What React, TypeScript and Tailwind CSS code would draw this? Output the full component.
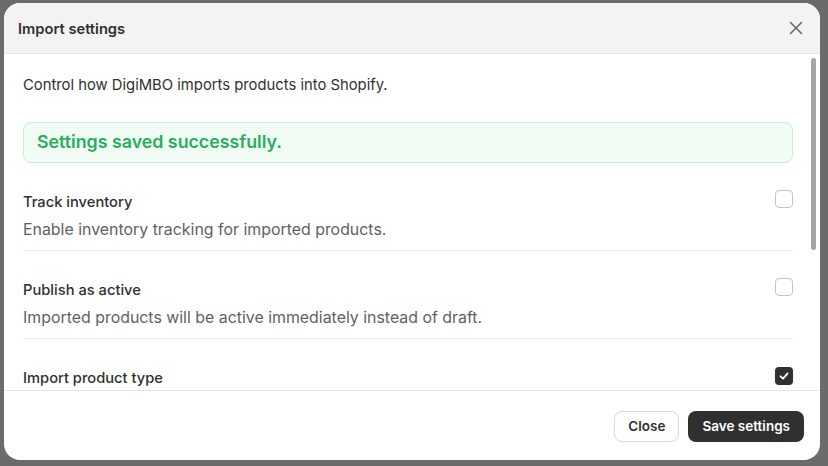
import React from "react";

function Checkbox({ checked }: { checked?: boolean }) {
  if (checked) {
    return (
      <div className="w-[18px] h-[18px] rounded-[4px] bg-[#303030] flex items-center justify-center shrink-0">
        <svg width="12" height="12" viewBox="0 0 12 12" fill="none">
          <path d="M2.5 6.3 L5 8.6 L9.6 3.4" stroke="white" strokeWidth="1.8" strokeLinecap="round" strokeLinejoin="round" />
        </svg>
      </div>
    );
  }
  return <div className="w-[18px] h-[18px] rounded-[4px] border border-[#c4c4c4] bg-white shrink-0" />;
}

function Row({ label, desc, checked, last }: { label: string; desc?: string; checked?: boolean; last?: boolean }) {
  return (
    <div className={`flex justify-between items-start ${last ? "" : "border-b border-[#e6e8e8]"} pt-[28px] pb-[8px]`}>
      <div className="flex flex-col">
        <div className="text-[14.7px] leading-[22px] font-medium text-[#303030]">{label}</div>
        {desc && <div className="text-[15.9px] leading-[24px] mt-[5px] text-[#616161]">{desc}</div>}
      </div>
      <div className={last ? "" : "mt-[-1px]"}>
        <Checkbox checked={checked} />
      </div>
    </div>
  );
}

export default function App() {
  return (
    <div className="w-[828px] h-[466px] bg-[#6b6b6b] pt-[3px] pl-[4px] pr-[8px] pb-[6px] flex" style={{ fontFamily: "Inter, 'Liberation Sans', sans-serif" }}>
      <div className="relative flex-1 bg-white rounded-[16px] overflow-hidden flex flex-col">
        <div className="h-[51px] bg-[#f3f3f3] border-b border-[#e3e3e3] flex items-center justify-between pl-[14px] pr-[17px] shrink-0">
          <div className="text-[14.7px] font-semibold text-[#303030] pt-[2px]">Import settings</div>
          <svg width="14" height="14" viewBox="0 0 14 14" fill="none">
            <path d="M1.5 1.5 L12.5 12.5 M12.5 1.5 L1.5 12.5" stroke="#6b6b6b" strokeWidth="1.6" strokeLinecap="round" />
          </svg>
        </div>
        <div className="relative h-[337px] overflow-hidden border-b border-[#e6e6e6] shrink-0">
          <div className="pl-[19px] pr-[27px] pt-[19px]">
            <div className="text-[14.8px] leading-[24px] text-[#303030]">Control how DigiMBO imports products into Shopify.</div>
            <div className="mt-[25px] h-[41px] rounded-[8px] border border-[#c8ecd4] bg-[#f0fcf4] flex items-center pl-[13px]">
              <span className="text-[17.8px] font-semibold text-[#2aad5c]">Settings saved successfully.</span>
            </div>
            <div>
              <Row label="Track inventory" desc="Enable inventory tracking for imported products." />
              <Row label="Publish as active" desc="Imported products will be active immediately instead of draft." />
              <Row label="Import product type" checked last />
            </div>
          </div>
          <div className="absolute right-[4px] top-[4px] w-[5px] h-[192px] rounded-full bg-[#a3a6a8]" />
        </div>
        <div className="flex-1 flex justify-end items-center gap-[9px] pr-[16px] pt-[1px]">
          <button className="h-[31px] px-[13px] rounded-[8px] border border-[#d6d6d6] bg-white text-[13.5px] font-semibold text-[#303030]">Close</button>
          <button className="h-[31px] px-[14px] rounded-[8px] bg-[#303030] text-[13.5px] font-semibold text-white">Save settings</button>
        </div>
      </div>
    </div>
  );
}
